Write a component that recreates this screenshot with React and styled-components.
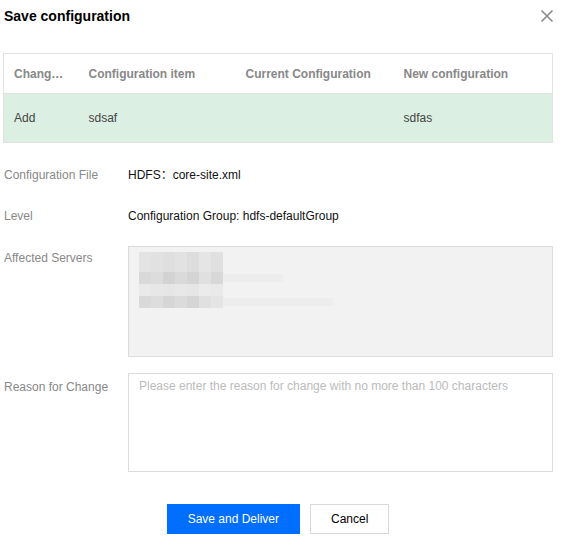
import React from 'react';
import styled, { createGlobalStyle } from 'styled-components';

const GlobalStyle = createGlobalStyle`
  body {
    margin: 0;
    background: #fff;
    font-family: "Liberation Sans", Arial, "Noto Sans CJK SC", sans-serif;
    font-size: 12px;
    color: #333;
  }
`;

const Dialog = styled.div`
  width: 567px;
  box-sizing: border-box;
  padding: 6px 14px 0 3px;
`;

const Header = styled.div`
  display: flex;
  align-items: center;
  justify-content: space-between;
  height: 20px;
  margin-bottom: 27px;

  h2 {
    margin: 0 0 0 1px;
    font-size: 14px;
    font-weight: bold;
    color: #000;
  }
`;

const CloseButton = styled.button`
  display: flex;
  padding: 0;
  margin: 0 -1px 0 0;
  border: 0;
  background: none;
  cursor: pointer;
`;

const Table = styled.table`
  width: 100%;
  border-collapse: collapse;
  table-layout: fixed;
  border: 1px solid #e2e2e2;
`;

const Th = styled.th`
  height: 39px;
  padding: 0 10px;
  text-align: left;
  font-weight: bold;
  color: #888;
  white-space: nowrap;
  overflow: hidden;
  text-overflow: ellipsis;
  border-bottom: 1px solid #e2e2e2;
`;

const Td = styled.td`
  height: 48px;
  padding: 0 10px;
  color: #444;
  background: #dcefe3;
`;

const Form = styled.div`
  display: flex;
  flex-direction: column;
  margin-top: 22px;
`;

const Row = styled.div`
  display: grid;
  grid-template-columns: 125px 1fr;
  margin-bottom: ${({ gap }) => gap}px;
`;

const Label = styled.div`
  line-height: 20px;
  padding: ${({ top }) => top || 0}px 0 0 1px;
  color: #888;
`;

const Value = styled.div`
  height: 20px;
  line-height: 20px;
  color: #111;
`;

const ServerBox = styled.div`
  box-sizing: border-box;
  height: 111px;
  border: 1px solid #dcdcdc;
  background: #f2f2f2;
  padding: 5px 0 0 10px;
`;

const Reason = styled.textarea`
  display: block;
  box-sizing: border-box;
  width: 100%;
  height: 99px;
  margin: 0;
  padding: 4px 10px;
  border: 1px solid #dcdcdc;
  resize: none;
  font-family: inherit;
  font-size: 12px;
  line-height: 16px;
  color: #333;

  &::placeholder {
    color: #bbb;
  }
`;

const Footer = styled.div`
  display: flex;
  justify-content: center;
  gap: 10px;
  margin-top: 32px;
`;

const Button = styled.button`
  height: 30px;
  padding: 0 20px;
  font-family: inherit;
  font-size: 12px;
  cursor: pointer;
  border: 1px solid ${({ primary }) => (primary ? '#006eff' : '#d9d9d9')};
  background: ${({ primary }) => (primary ? '#006eff' : '#fff')};
  color: ${({ primary }) => (primary ? '#fff' : '#000')};
  min-width: ${({ primary }) => (primary ? 133 : 79)}px;
`;

// mosaic standing in for the blurred server list
const cells = [
  ['#e3e3e3', '#e1e1e1', '#dfdfdf', '#e2e2e2', '#dddddd', '#e5e5e5', '#e0e0e0'],
  ['#d9d9d9', '#dcdcdc', '#d3d3d3', '#dadada', '#d4d4d4', '#e0e0e0', '#d8d8d8'],
  ['#e9e9e9', '#e7e7e7', '#e6e6e6', '#e8e8e8', '#e6e6e6', '#ebebeb', '#e9e9e9'],
  ['#d9d9d9', '#dddddd', '#d6d6d6', '#dbdbdb', '#d5d5d5', '#e0e0e0', '#e5e5e5'],
];
const rowY = [0, 20, 32, 44];
const rowH = [20, 12, 12, 12];

const Blurred = () => (
  <svg width="200" height="56" viewBox="0 0 200 56">
    <rect x="84" y="22" width="60" height="8" fill="#ededed" />
    <rect x="84" y="46" width="110" height="8" fill="#ededed" />
    {cells.map((r, i) =>
      r.map((c, j) => (
        <rect key={`${i}-${j}`} x={j * 12} y={rowY[i]} width="12" height={rowH[i]} fill={c} />
      ))
    )}
  </svg>
);

const App = () => (
  <Dialog>
    <GlobalStyle />
    <Header>
      <h2>Save configuration</h2>
      <CloseButton aria-label="close">
        <svg width="14" height="14" viewBox="0 0 14 14">
          <path d="M1.5 1.5l11 11M12.5 1.5l-11 11" stroke="#888" strokeWidth="1.6" fill="none" />
        </svg>
      </CloseButton>
    </Header>

    <Table>
      <colgroup>
        <col style={{ width: 75 }} />
        <col style={{ width: 157 }} />
        <col style={{ width: 158 }} />
        <col />
      </colgroup>
      <thead>
        <tr>
          <Th>Change Type</Th>
          <Th>Configuration item</Th>
          <Th>Current Configuration</Th>
          <Th>New configuration</Th>
        </tr>
      </thead>
      <tbody>
        <tr>
          <Td>Add</Td>
          <Td>sdsaf</Td>
          <Td></Td>
          <Td>sdfas</Td>
        </tr>
      </tbody>
    </Table>

    <Form>
      <Row gap={21}>
        <Label>Configuration File</Label>
        <Value>HDFS：core-site.xml</Value>
      </Row>
      <Row gap={20}>
        <Label>Level</Label>
        <Value>Configuration Group: hdfs-defaultGroup</Value>
      </Row>
      <Row gap={16}>
        <Label top={2}>Affected Servers</Label>
        <ServerBox>
          <Blurred />
        </ServerBox>
      </Row>
      <Row gap={0}>
        <Label top={4}>Reason for Change</Label>
        <Reason placeholder="Please enter the reason for change with no more than 100 characters" />
      </Row>
    </Form>

    <Footer>
      <Button primary>Save and Deliver</Button>
      <Button>Cancel</Button>
    </Footer>
  </Dialog>
);

export default App;
